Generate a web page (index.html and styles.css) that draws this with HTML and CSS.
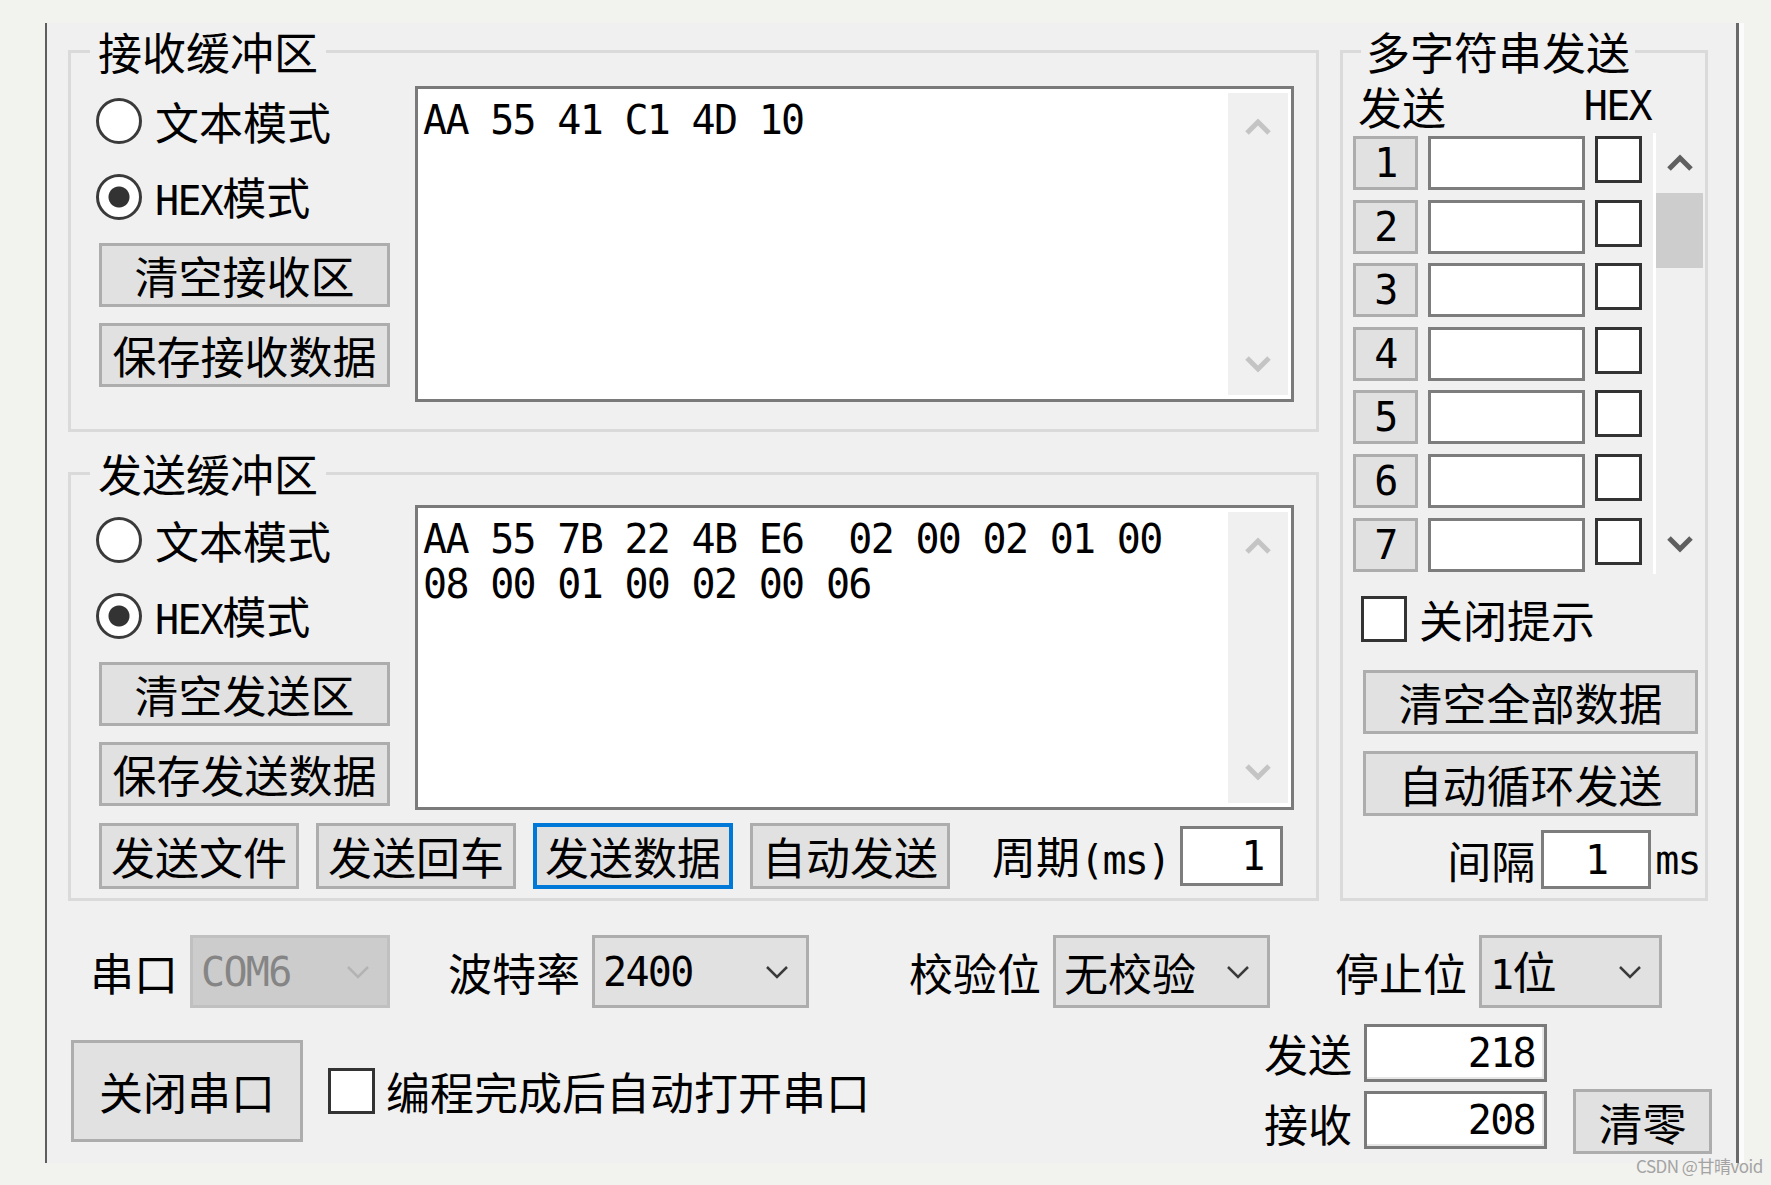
FILE: index.html
```html
<!DOCTYPE html>
<html lang="zh-CN">
<head>
<meta charset="utf-8">
<title>串口助手</title>
<link rel="stylesheet" href="styles.css">
</head>
<body>
<div class="dialog">
  <div class="groups">
    <div class="left-col">
      <fieldset class="group g-recv">
        <legend>接收缓冲区</legend>
        <div class="g-body">
          <div class="ctrl-col">
            <div class="radio"><span class="rb"></span><span>文本模式</span></div>
            <div class="radio"><span class="rb on"></span><span><span class="a">HEX</span>模式</span></div>
            <div class="btn side">清空接收区</div>
            <div class="btn side">保存接收数据</div>
          </div>
          <div class="textbox tb-recv">
            <div class="hex">AA 55 41 C1 4D 10</div>
            <div class="vscroll">
              <svg width="28" height="18" viewBox="0 0 28 18"><polyline points="3,15 14,4 25,15" fill="none" stroke="#c4c4c4" stroke-width="5"/></svg>
              <svg width="28" height="18" viewBox="0 0 28 18"><polyline points="3,3 14,14 25,3" fill="none" stroke="#c4c4c4" stroke-width="5"/></svg>
            </div>
          </div>
        </div>
      </fieldset>
      <fieldset class="group g-send">
        <legend>发送缓冲区</legend>
        <div class="g-body">
          <div class="top-row">
            <div class="ctrl-col">
              <div class="radio"><span class="rb"></span><span>文本模式</span></div>
              <div class="radio"><span class="rb on"></span><span><span class="a">HEX</span>模式</span></div>
              <div class="btn side">清空发送区</div>
              <div class="btn side">保存发送数据</div>
            </div>
            <div class="textbox tb-send">
              <div class="hex">AA 55 7B 22 4B E6  02 00 02 01 00
08 00 01 00 02 00 06</div>
              <div class="vscroll vs-send">
                <svg width="28" height="18" viewBox="0 0 28 18"><polyline points="3,15 14,4 25,15" fill="none" stroke="#c4c4c4" stroke-width="5"/></svg>
                <svg width="28" height="18" viewBox="0 0 28 18"><polyline points="3,3 14,14 25,3" fill="none" stroke="#c4c4c4" stroke-width="5"/></svg>
              </div>
            </div>
          </div>
          <div class="btn-row">
            <div class="btn fbtn">发送文件</div>
            <div class="btn fbtn">发送回车</div>
            <div class="btn fbtn focus">发送数据</div>
            <div class="btn fbtn">自动发送</div>
            <span class="period-lbl">周期<span class="a">(ms)</span></span>
            <div class="edit period-in"><span class="a">1</span></div>
          </div>
        </div>
      </fieldset>
    </div>

    <fieldset class="group g-multi">
      <legend>多字符串发送</legend>
      <div class="m-body">
        <div class="mhead"><span>发送</span><span class="a">HEX</span></div>
        <div class="mlist-wrap">
          <div class="mlist">
            <div class="mrow"><div class="btn nbtn"><span class="a">1</span></div><div class="edit medit"></div><span class="cb mcb"></span></div>
            <div class="mrow"><div class="btn nbtn"><span class="a">2</span></div><div class="edit medit"></div><span class="cb mcb"></span></div>
            <div class="mrow"><div class="btn nbtn"><span class="a">3</span></div><div class="edit medit"></div><span class="cb mcb"></span></div>
            <div class="mrow"><div class="btn nbtn"><span class="a">4</span></div><div class="edit medit"></div><span class="cb mcb"></span></div>
            <div class="mrow"><div class="btn nbtn"><span class="a">5</span></div><div class="edit medit"></div><span class="cb mcb"></span></div>
            <div class="mrow"><div class="btn nbtn"><span class="a">6</span></div><div class="edit medit"></div><span class="cb mcb"></span></div>
            <div class="mrow"><div class="btn nbtn"><span class="a">7</span></div><div class="edit medit"></div><span class="cb mcb"></span></div>
          </div>
          <div class="mscroll">
            <div class="arr"><svg width="28" height="18" viewBox="0 0 28 18"><polyline points="3,15 14,4 25,15" fill="none" stroke="#5f5f5f" stroke-width="5"/></svg></div>
            <div class="thumb"></div>
            <div class="spacer"></div>
            <div class="arr"><svg width="28" height="18" viewBox="0 0 28 18"><polyline points="3,3 14,14 25,3" fill="none" stroke="#5f5f5f" stroke-width="5"/></svg></div>
          </div>
        </div>
        <div class="chk close-tip"><span class="cb"></span><span>关闭提示</span></div>
        <div class="btn mbtn mbtn1">清空全部数据</div>
        <div class="btn mbtn mbtn2">自动循环发送</div>
        <div class="interval">
          <span class="int-lbl">间隔</span>
          <div class="edit int-in"><span class="a">1</span></div>
          <span class="a ms">ms</span>
        </div>
      </div>
    </fieldset>
  </div>

  <div class="combos">
    <span class="lbl">串口</span>
    <div class="combo c-port disabled"><span class="a">COM6</span><svg width="24" height="14" viewBox="0 0 24 14"><polyline points="2,2 12,12 22,2" fill="none" stroke="#b3b3b3" stroke-width="2.5"/></svg></div>
    <span class="lbl l-baud">波特率</span>
    <div class="combo c-baud"><span class="a">2400</span><svg width="24" height="14" viewBox="0 0 24 14"><polyline points="2,2 12,12 22,2" fill="none" stroke="#3a3a3a" stroke-width="2.5"/></svg></div>
    <span class="lbl l-parity">校验位</span>
    <div class="combo c-parity"><span>无校验</span><svg width="24" height="14" viewBox="0 0 24 14"><polyline points="2,2 12,12 22,2" fill="none" stroke="#3a3a3a" stroke-width="2.5"/></svg></div>
    <span class="lbl l-stop">停止位</span>
    <div class="combo c-stop"><span><span class="a">1</span>位</span><svg width="24" height="14" viewBox="0 0 24 14"><polyline points="2,2 12,12 22,2" fill="none" stroke="#3a3a3a" stroke-width="2.5"/></svg></div>
  </div>

  <div class="rowb">
    <div class="btn close-btn">关闭串口</div>
    <div class="chk auto-open"><span class="cb"></span><span>编程完成后自动打开串口</span></div>
    <div class="counters">
      <span class="c-lbl">发送</span>
      <div class="cnt"><span class="a">218</span></div>
      <span></span>
      <span class="c-lbl">接收</span>
      <div class="cnt"><span class="a">208</span></div>
      <div class="btn clr-btn">清零</div>
    </div>
  </div>
</div>
<div class="wm">CSDN @甘晴void</div>
</body>
</html>
```

FILE: styles.css
```css
* { box-sizing: border-box; }
html, body { margin: 0; padding: 0; }
body {
  width: 1771px;
  height: 1185px;
  overflow: hidden;
  position: relative;
  background: #f2f2ee;
  font-family: "Noto Sans CJK SC", "Noto Sans CJK JP", sans-serif;
  font-size: 44px;
  line-height: 1;
  color: #000;
}
.a {
  font-family: "DejaVu Sans Mono", "Liberation Mono", monospace;
  font-size: 40px;
  letter-spacing: -1.7px;
}
.dialog {
  margin: 23px 0 0 45px;
  width: 1694px;
  height: 1140px;
  background: #f0f0f0;
  border-left: 2px solid #5e5e5e;
  border-right: 3px solid #696969;
  box-shadow: 5px 0 0 #fbfbfb;
  padding-top: 3px;
}
.groups { display: flex; margin-left: 21px; }
.left-col { display: flex; flex-direction: column; gap: 16px; width: 1251px; flex: none; }

fieldset.group {
  margin: 0;
  padding: 0;
  border: 3px solid #dadada;
  min-width: 0;
}
.group legend {
  padding: 0 8px;
  margin-left: 19px;
  font-size: 44px;
  line-height: 50px;
}
fieldset.g-recv { height: 406px; }
fieldset.g-send { height: 453px; }
fieldset.g-multi { width: 368px; height: 875px; margin-left: 21px; flex: none; }
.g-multi legend { margin-left: 18px; padding: 0 5px; }

.g-body { display: flex; padding: 0 22px 0 28px; align-items: flex-start; }
.g-send .g-body { flex-direction: column; align-items: stretch; }
.top-row { display: flex; align-items: flex-start; }

.ctrl-col { width: 291px; display: flex; flex-direction: column; gap: 16px; flex: none; }
.g-recv .ctrl-col { margin-top: 15px; }
.g-send .ctrl-col { margin-top: 12px; }

.radio { display: flex; align-items: center; gap: 13px; height: 60px; margin-left: -3px; }
.rb {
  width: 46px; height: 46px; flex: none;
  border-radius: 50%;
  border: 3px solid #3a3a3a;
  background: #fff;
}
.rb.on { background: radial-gradient(circle, #333 0 10px, #fff 11px); }

.btn {
  display: flex; align-items: center; justify-content: center;
  background: #e1e1e1;
  border: 3px solid #adadad;
  white-space: nowrap;
}
.btn.focus { border: 4px solid #0078d7; }
.side { height: 64px; }

.edit { background: #fff; border: 3px solid #7d7d7d; }

.textbox {
  display: flex;
  background: #fff;
  border: 3px solid #7a7a7a;
  margin-left: 25px;
  width: 879px;
  flex: none;
}
.tb-recv { margin-top: 10px; height: 316px; }
.tb-send { margin-top: 7px; height: 305px; }
.hex {
  flex: 1;
  font-family: "DejaVu Sans Mono", "Liberation Mono", monospace;
  font-size: 40px;
  letter-spacing: -1.7px;
  line-height: 45px;
  white-space: pre;
  padding: 9px 0 0 5px;
}
.vscroll {
  width: 60px;
  margin: 4px 3px 4px 0;
  background: #f0f0f0;
  display: flex; flex-direction: column;
  justify-content: space-between; align-items: center;
  padding: 25px 0 22px;
}

.btn-row { display: flex; align-items: center; gap: 17px; margin-top: 13px; height: 66px; }
.fbtn { width: 200px; height: 66px; }
.period-lbl { margin-left: 25px; white-space: nowrap; }
.period-in {
  width: 103px; height: 60px; margin-left: -7px;
  display: flex; align-items: center; justify-content: flex-end; padding-right: 16px;
}

/* multi-string group */
.m-body { display: flex; flex-direction: column; padding-right: 2px; }
.mhead { display: flex; justify-content: space-between; align-items: center; height: 60px; padding: 0 52px 0 15px; }
.mlist-wrap { display: flex; align-items: flex-start; padding-left: 10px; }
.mlist { display: flex; flex-direction: column; gap: 9.6px; }
.mrow { display: flex; align-items: flex-start; gap: 10px; height: 54px; }
.nbtn { width: 65px; height: 54px; }
.medit { width: 157px; height: 54px; }
.cb { display: block; width: 46px; height: 46px; flex: none; border: 3px solid #333; background: #fff; }
.mcb { width: 47px; height: 47px; }
.mscroll {
  margin-left: 11px; margin-top: -3px;
  width: 50px; height: 441px;
  border-left: 3px solid #fff;
  display: flex; flex-direction: column;
}
.mscroll .arr { height: 60px; display: flex; align-items: center; justify-content: center; }
.thumb { height: 75px; background: #cdcdcd; }
.spacer { flex: 1; }

.chk { display: flex; align-items: center; gap: 12px; }
.close-tip { margin: 22px 0 0 18px; height: 46px; }
.mbtn { width: 335px; margin-left: 20px; }
.mbtn1 { margin-top: 28px; height: 64px; }
.mbtn2 { margin-top: 17px; height: 65px; }
.interval { display: flex; align-items: center; justify-content: flex-end; height: 59px; margin-top: 14px; padding-right: 3px; }
.int-lbl { margin-right: 6px; }
.int-in { width: 110px; height: 59px; display: flex; align-items: center; justify-content: center; }
.ms { margin-left: 4px; }

/* bottom */
.combos { display: flex; align-items: center; margin-top: 34px; height: 73px; padding-left: 43px; }
.lbl { margin-right: 12px; white-space: nowrap; }
.l-baud { margin-left: 58px; }
.l-parity { margin-left: 100px; }
.l-stop { margin-left: 65px; }
.combo {
  display: flex; align-items: center; justify-content: space-between;
  height: 73px;
  background: #e1e1e1;
  border: 3px solid #adadad;
  padding: 0 17px 0 8px;
  white-space: nowrap;
}
.combo.disabled { background: #cccccc; border-color: #c0c0c0; color: #858585; }
.c-port { width: 200px; }
.c-baud { width: 217px; }
.c-parity { width: 217px; }
.c-stop { width: 183px; }

.rowb { display: flex; align-items: flex-start; margin-top: 16px; }
.close-btn { width: 232px; height: 102px; margin: 16px 0 0 24px; }
.auto-open { margin: 43px 0 0 25px; height: 47px; gap: 11px; }
.auto-open .cb { width: 47px; height: 46px; }
.counters {
  margin-left: auto; margin-right: 24px;
  display: grid;
  grid-template-columns: 88px 183px 153px;
  column-gap: 12px; row-gap: 9px;
  align-items: start;
}
.c-lbl { align-self: center; white-space: nowrap; }
.cnt {
  height: 58px;
  border: 3px solid #7a7a7a;
  background: #fff;
  box-shadow: inset -2px -2px 0 #e6e6e6;
  display: flex; align-items: center; justify-content: flex-end;
  padding-right: 9px;
}
.clr-btn { width: 139px; height: 65px; margin-left: 14px; margin-top: -2px; }

.wm {
  position: absolute;
  left: 1636px; top: 1156px;
  font-family: "Noto Sans CJK SC", sans-serif;
  font-size: 17px;
  line-height: 20px;
  color: #a3a3a3;
  letter-spacing: -0.5px;
}
```
